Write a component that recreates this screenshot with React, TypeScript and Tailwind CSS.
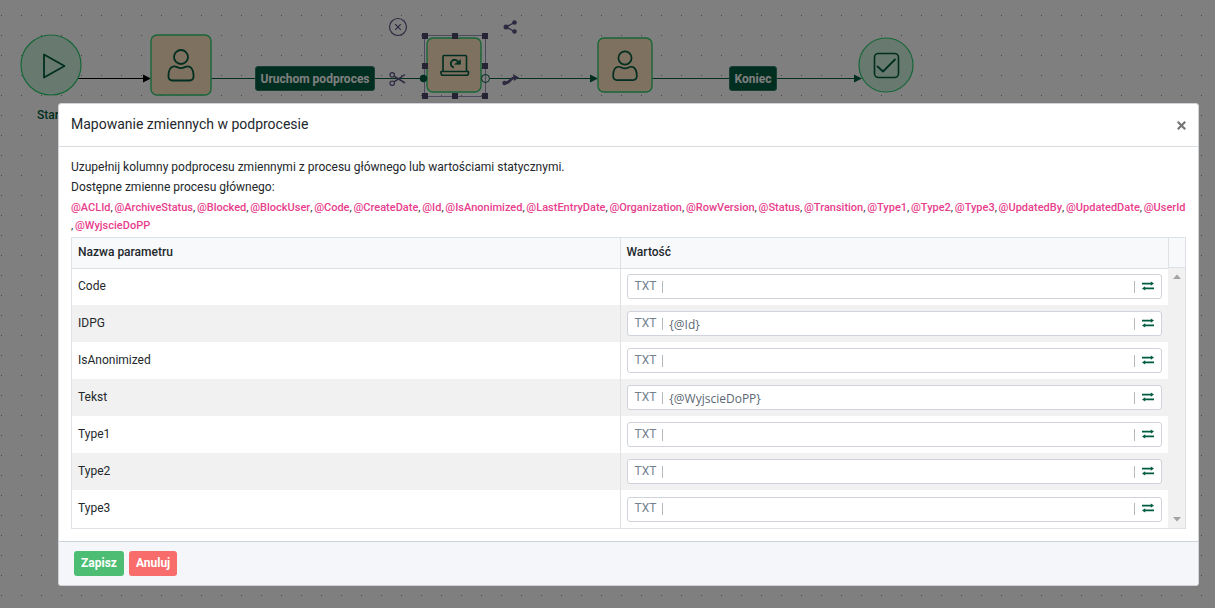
import { useState, type ReactNode } from "react";

const variables = [
  "@ACLId", "@ArchiveStatus", "@Blocked", "@BlockUser", "@Code", "@CreateDate", "@Id",
  "@IsAnonimized", "@LastEntryDate", "@Organization", "@RowVersion", "@Status", "@Transition",
  "@Type1", "@Type2", "@Type3", "@UpdatedBy", "@UpdatedDate", "@UserId", "@WyjscieDoPP",
];

const initialValues: Record<string, string> = {
  Code: "",
  IDPG: "{@Id}",
  IsAnonimized: "",
  Tekst: "{@WyjscieDoPP}",
  Type1: "",
  Type2: "",
  Type3: "",
};

function Arrow({ x, y, color }: { x: number; y: number; color: string }) {
  return <path d={`M${x} ${y}l-8 -4v8z`} fill={color} />;
}

function Person({ x, y, scale = 1 }: { x: number; y: number; scale?: number }) {
  return (
    <g transform={`translate(${x} ${y}) scale(${scale})`} fill="none" stroke="#005c40" strokeWidth="1.8" strokeLinejoin="round">
      <circle cx="0" cy="-8.5" r="7" />
      <path d="M-6.5 0.8C-10.500 0.800 -12.600 5 -12.600 10.500C-12.600 13.500 -11.500 15 -8.500 15H8.500C11.500 15 12.600 13.500 12.600 10.500C12.600 5 10.500 0.800 6.500 0.800C4 0.800 3.500 2.600 0 2.600C-3.500 2.600 -4 0.800 -6.500 0.800Z" />
    </g>
  );
}

function DiagramLabel({ className, children }: { className: string; children: ReactNode }) {
  return (
    <span
      className={`absolute flex h-[25px] items-center justify-center rounded-[3px] border border-[#337d66] bg-[#005c40] text-xs font-bold text-white ${className}`}
    >
      {children}
    </span>
  );
}

const handles = [
  [425, 36], [455, 36], [485, 36],
  [425, 66], [485, 66],
  [425, 96], [455, 96], [485, 96],
];

function Diagram() {
  return (
    <div className="absolute inset-0 overflow-hidden bg-white">
      <svg className="absolute inset-0 size-full" aria-hidden="true">
        <defs>
          <pattern id="dots" width="20" height="20" patternUnits="userSpaceOnUse">
            <rect x="1" y="15" width="1" height="1" fill="#8a8a8a" />
          </pattern>
        </defs>
        <rect width="100%" height="100%" fill="url(#dots)" />

        <path d="M78 78.500H144" stroke="#000" />
        <Arrow x={151} y={78.5} color="#000" />
        <path d="M211 78.500H424M490 78.500H591M652 78.500H856" stroke="#005c40" />
        <Arrow x={598} y={78.5} color="#005c40" />
        <Arrow x={862} y={78.5} color="#005c40" />

        <g fill="#d0f5e0" stroke="#2ecc71" strokeWidth="1.2">
          <circle cx="51" cy="65" r="30" />
          <circle cx="886" cy="65" r="27" />
        </g>
        <g fill="#ffe3be" stroke="#2ecc71" strokeWidth="1.4">
          <rect x="151" y="35" width="60" height="60" rx="6" />
          <rect x="427" y="38" width="54" height="54" rx="6" />
          <rect x="598" y="38" width="54" height="54" rx="6" />
        </g>

        <path d="M44 54.500V77.500L64.500 66Z" fill="none" stroke="#005c40" strokeWidth="1.800" strokeLinejoin="round" />
        <Person x={181} y={65.5} />
        <Person x={625} y={66} scale={0.94} />

        <g fill="none" stroke="#005c40" strokeWidth="1.600" strokeLinejoin="round" strokeLinecap="round">
          <path d="M443 71V56.500Q443 55.500 444 55.500H465.500Q466.500 55.500 466.500 56.500V71" />
          <path d="M441 71.500H468.500V73Q468.500 75.300 466.500 75.300H443Q441 75.300 441 73Z" />
          <path d="M453.800 67.500A3.900 3.900 0 1 1 458.200 62" strokeWidth="1.900" strokeLinecap="butt" />
          <path d="M460.500 60V64.300H455Z" fill="#005c40" strokeWidth="0.600" />
          <rect x="874.500" y="53.500" width="24" height="24" rx="4" />
          <path d="M877.500 66.500L883 71.500L895 59.500" strokeWidth="1.800" />
        </g>

        <rect x="424.500" y="35.500" width="61" height="61" fill="none" stroke="#9494b8" />
        <circle cx="423.500" cy="78.500" r="3.700" fill="#005c40" />
        <circle cx="485.500" cy="78.500" r="4" fill="none" stroke="#005c40" />
        {handles.map(([x, y]) => (
          <rect key={`${x}-${y}`} x={x - 3} y={y - 3} width="6" height="6" fill="#4a4668" />
        ))}

        <g fill="none" stroke="#5b5682" strokeWidth="1.200">
          <circle cx="398" cy="27" r="8.500" />
          <path d="M395.200 24.200L400.800 29.800M400.800 24.200L395.200 29.800" />
          <circle cx="392.200" cy="74.800" r="2.200" />
          <circle cx="392.200" cy="83.200" r="2.200" />
          <path d="M394 76.200L405 83M394 81.800L405 74.500" strokeWidth="1.500" />
          <path d="M514.500 22.500L506 27L514.500 31.500" strokeWidth="1.400" />
        </g>
        <g fill="#5b5682">
          <circle cx="514.500" cy="22.500" r="2.300" />
          <circle cx="506" cy="27" r="2.500" />
          <circle cx="514.500" cy="31.500" r="2.300" />
          <circle cx="504.500" cy="83" r="2.200" />
          <path d="M513 74L519 77.500L514 81Z" />
        </g>
        <path d="M504.500 83C511 83.500 509 77.500 516 77.500" fill="none" stroke="#5b5682" strokeWidth="2.600" />
      </svg>
      <DiagramLabel className="left-[255px] top-[66px] w-[120px]">Uruchom podproces</DiagramLabel>
      <DiagramLabel className="left-[729px] top-[66px] w-12">Koniec</DiagramLabel>
      <span className="absolute left-[37px] top-[107px] text-xs leading-4 font-medium text-[#005c40]">Start</span>
    </div>
  );
}

function SwapIcon() {
  return (
    <svg className="h-2.5 w-3" viewBox="0 0 12 10" fill="#005c40" aria-hidden="true">
      <path d="M0 1.800H8.800V0.400L12 2.600L8.800 4.800V3.400H0ZM12 6.600H3.200V5.200L0 7.400L3.200 9.600V8.200H12Z" />
    </svg>
  );
}

function ScrollTrack() {
  return (
    <div className="flex w-[17px] flex-col items-center justify-between bg-[#f1f1f1] py-1.5" aria-hidden="true">
      <svg className="h-[5px] w-2" viewBox="0 0 8 5" fill="#a3a3a3"><path d="M0 5L4 0.500L8 5Z" /></svg>
      <svg className="h-[5px] w-2" viewBox="0 0 8 5" fill="#a3a3a3"><path d="M0 0L4 4.500L8 0Z" /></svg>
    </div>
  );
}

function MappingTable() {
  const [values, setValues] = useState(initialValues);
  return (
    <div className="flex border border-[#dee2e6]">
      <table className="grow table-fixed border-collapse text-left">
        <thead>
          <tr className="h-[30px] border-b border-[#dee2e6] bg-[#f8f9fb]">
            <th className="w-1/2 border-r border-[#dee2e6] px-1.5 pb-0.5 font-medium">Nazwa parametru</th>
            <th className="w-1/2 px-1.5 pb-0.5 font-medium">Wartość</th>
          </tr>
        </thead>
        <tbody>
          {Object.entries(values).map(([name, value]) => (
            <tr key={name} className="h-[37px] last:h-[38px] even:bg-[#f1f1f1]">
              <td className="border-r border-[#dee2e6] px-1.5 pt-0 pb-0.5">
                <label htmlFor={`param-${name}`}>{name}</label>
              </td>
              <td className="px-1.5 py-0">
                <div className="flex h-[25px] items-center rounded-[3px] border border-[#ced4da] bg-white px-[7px]">
                  <button type="button" className="pb-0.5 leading-4 text-[#73818f]">TXT</button>
                  <span className="ml-1.5 h-3 w-px bg-[#b5b9be]" />
                  <input
                    id={`param-${name}`}
                    value={value}
                    onChange={(e) => setValues({ ...values, [name]: e.target.value })}
                    className="h-full min-w-0 grow bg-transparent px-1.5 pt-0.5 font-['Open_Sans',sans-serif] text-xs text-[#5c6873] outline-none"
                  />
                  <span className="mr-[7px] h-3 w-px bg-[#b5b9be]" />
                  <button type="button" aria-label="Zamień" className="pb-0.5"><SwapIcon /></button>
                </div>
              </td>
            </tr>
          ))}
        </tbody>
      </table>
      <div className="flex flex-col">
        <div className="h-[30px] border-b border-l border-[#dee2e6] bg-[#f8f9fb]" />
        <div className="flex grow"><ScrollTrack /></div>
      </div>
    </div>
  );
}

export default function App() {
  return (
    <div className="relative min-h-screen font-[Roboto,sans-serif] text-xs text-[#23282c]">
      <Diagram />
      <div className="relative min-h-screen bg-black/50 pt-[103px] pr-4 pb-[22px] pl-[58px]">
        <div role="dialog" aria-labelledby="dialog-title" className="overflow-hidden rounded-[3px] border border-[#d0d4d8] bg-white">
          <header className="flex h-[43px] items-center justify-between border-b border-[#d8dbe0] px-3">
            <h1 id="dialog-title" className="pb-0.5 text-sm">Mapowanie zmiennych w podprocesie</h1>
            <button type="button" aria-label="Zamknij">
              <svg className="size-[9px]" viewBox="0 0 8 8" stroke="#777" strokeWidth="2" aria-hidden="true">
                <path d="M0.700 0.700L7.300 7.300M7.300 0.700L0.700 7.300" />
              </svg>
            </button>
          </header>
          <main className="px-3 pt-2.5 pb-3">
            <p className="leading-5">Uzupełnij kolumny podprocesu zmiennymi z procesu głównego lub wartościami statycznymi.</p>
            <p className="leading-5">Dostępne zmienne procesu głównego:</p>
            <p className="mt-0.5 -mr-1 mb-0.5 flex flex-wrap text-[11px] leading-[18px]">
              {variables.map((v, i) => (
                <span key={v} className="whitespace-nowrap">
                  {i > 0 && <>,<span className="text-[7px] leading-none"> </span></>}
                  <b className="font-medium text-[#e83e8c]">{v}</b>
                </span>
              ))}
            </p>
            <MappingTable />
          </main>
          <footer className="flex h-11 items-center gap-[5px] border-t border-[#d0d4d8] bg-[#f5f6f9] px-[15px]">
            <button type="button" className="h-[25px] rounded-[3px] bg-[#4dbd74] px-[7px] pb-0.5 font-bold text-white">Zapisz</button>
            <button type="button" className="h-[25px] rounded-[3px] bg-[#f86c6b] px-[7px] pb-0.5 font-bold text-white">Anuluj</button>
          </footer>
        </div>
      </div>
    </div>
  );
}
